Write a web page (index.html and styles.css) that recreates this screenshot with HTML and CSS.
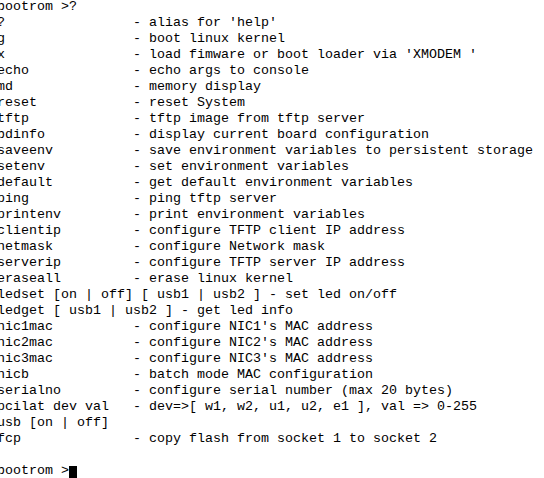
FILE: index.html
```html
<!DOCTYPE html>
<html lang="en">
<head>
<meta charset="utf-8">
<title>bootrom</title>
<link rel="stylesheet" href="styles.css">
</head>
<body>
<pre class="console">bootrom &gt;?
?                - alias for 'help'
g                - boot linux kernel
x                - load fimware or boot loader via 'XMODEM '
echo             - echo args to console
md               - memory display
reset            - reset System
tftp             - tftp image from tftp server
bdinfo           - display current board configuration
saveenv          - save environment variables to persistent storage
setenv           - set environment variables
default          - get default environment variables
ping             - ping tftp server
printenv         - print environment variables
clientip         - configure TFTP client IP address
netmask          - configure Network mask
serverip         - configure TFTP server IP address
eraseall         - erase linux kernel
ledset [on | off] [ usb1 | usb2 ] - set led on/off
ledget [ usb1 | usb2 ] - get led info
nic1mac          - configure NIC1's MAC address
nic2mac          - configure NIC2's MAC address
nic3mac          - configure NIC3's MAC address
nicb             - batch mode MAC configuration
serialno         - configure serial number (max 20 bytes)
pcilat dev val   - dev=&gt;[ w1, w2, u1, u2, e1 ], val =&gt; 0-255
usb [on | off]
fcp              - copy flash from socket 1 to socket 2

bootrom &gt;<span class="cursor"></span></pre>
</body>
</html>
```
FILE: styles.css
```css
html, body {
  margin: 0;
  padding: 0;
  background: #ffffff;
}
body {
  overflow: hidden;
}
.console {
  margin: -1px 0 0 -3px;
  font-family: "Liberation Mono", "Courier New", monospace;
  font-size: 13.333px;
  line-height: 16px;
  color: #000000;
  white-space: pre;
}
.cursor {
  display: inline-block;
  width: 8px;
  height: 13px;
  background: #000000;
  vertical-align: -5px;
}
```
